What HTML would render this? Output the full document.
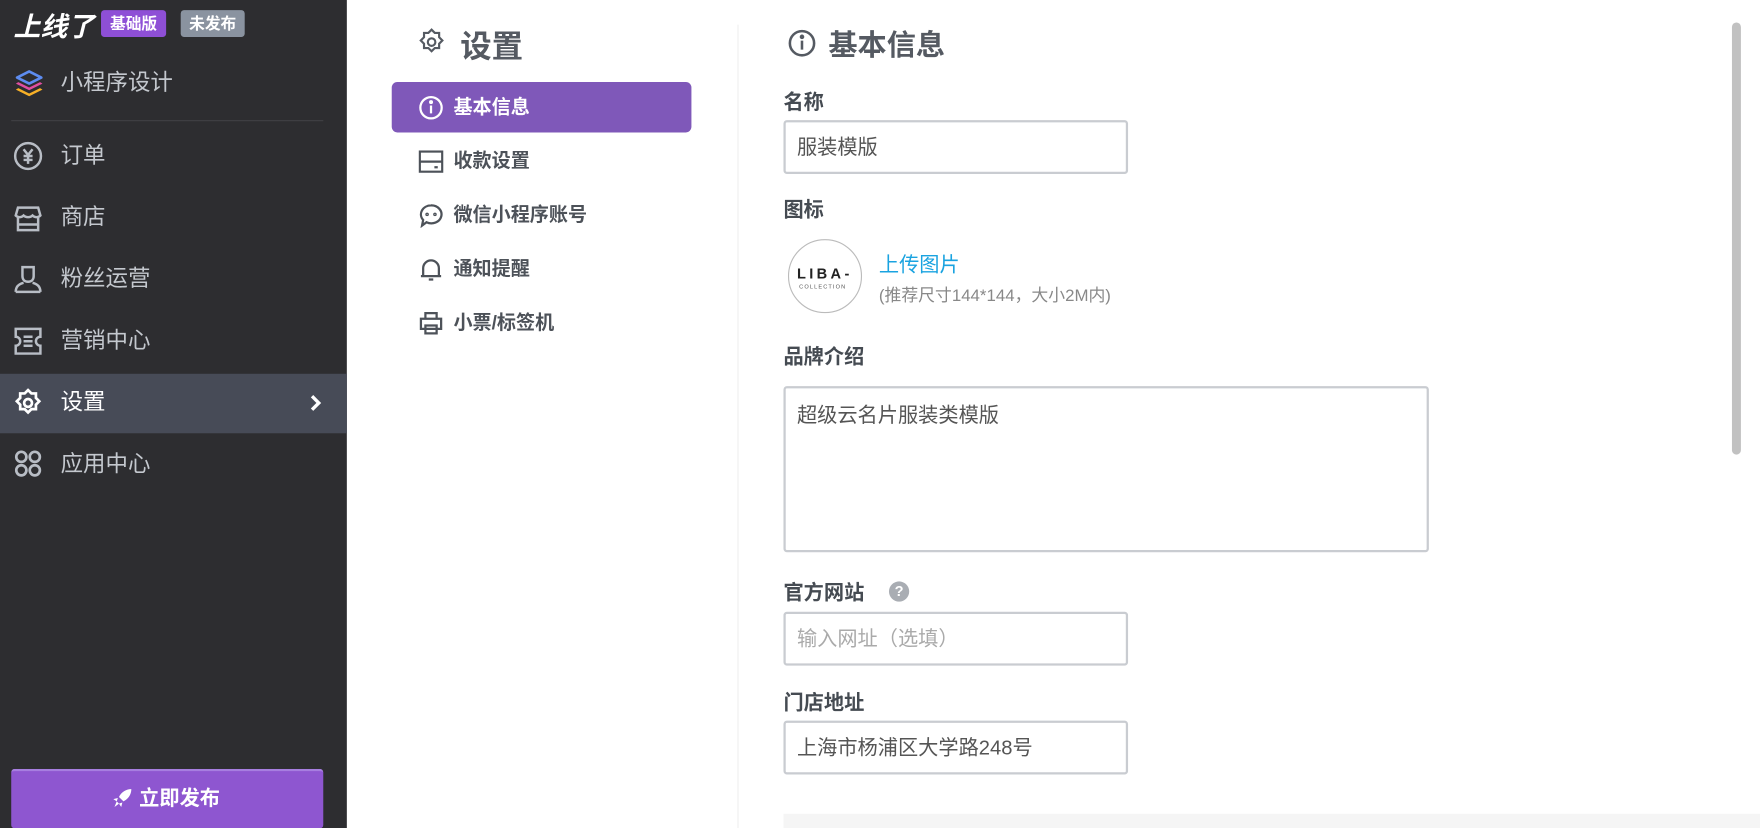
<!DOCTYPE html>
<html><head><meta charset="utf-8"><style>
html,body{margin:0;padding:0;width:1760px;height:828px;overflow:hidden;background:#fff}
#w{position:absolute;left:0;top:0;width:1568px;height:738px;transform:scale(1.12245);transform-origin:0 0;font-family:"Liberation Sans","Noto Sans CJK SC",sans-serif}
.a{position:absolute;white-space:nowrap}
#sb{position:absolute;left:0;top:0;width:309px;height:738px;background:#2d2d30}
.mi{position:absolute;left:54px;font-size:20px;color:#c4c8ce;line-height:24px}
.ic{position:absolute;left:12px}
.nav{position:absolute;left:404px;font-size:17px;font-weight:bold;color:#4d5259;line-height:20px}
.lbl{position:absolute;left:698px;font-size:18px;font-weight:bold;color:#454b52;line-height:22px}
.inp{position:absolute;left:698px;border:2px solid #c9ccd1;border-radius:3px;font-size:18px;color:#555;line-height:44px;padding-left:10px;box-sizing:border-box;height:48px;width:307px}
</style></head><body><div id="w">
<div id="sb">
 <div class="a" style="left:12px;top:4px;font-size:24px;font-weight:bold;font-style:italic;color:#fff">上线了</div>
 <div class="a" style="left:90px;top:9px;width:58px;height:24px;background:#8e4fd6;border-radius:3px;color:#fff;font-size:14px;font-weight:bold;text-align:center;line-height:24px">基础版</div>
 <div class="a" style="left:161px;top:9px;width:57px;height:24px;background:#8a93a0;border-radius:3px;color:#fff;font-size:14px;font-weight:bold;text-align:center;line-height:24px">未发布</div>
 <svg class="ic" style="top:61px" width="28" height="28" viewBox="0 0 26 26"><path d="M13 23L24 17.5 22 16.3 13 20.7 4 16.3 2 17.5z" fill="#f7b027"/><path d="M13 18L24 12.5 22 11.3 13 15.7 4 11.3 2 12.5z" fill="#e04ea0"/><path d="M13 12.5L23 7.5 13 2.5 3 7.5z" fill="none" stroke="#5d8cf0" stroke-width="2.2" stroke-linejoin="round"/></svg>
 <div class="mi" style="top:62px">小程序设计</div>
 <div class="a" style="left:10px;top:107px;width:278px;height:1px;background:#404044"></div>
 <svg class="ic" style="top:126px" width="26" height="26" viewBox="0 0 26 26" fill="none" stroke="#b8bdc5" stroke-width="2.2"><circle cx="13" cy="13" r="11.5"/><path d="M9 7l4 5 4-5M13 12v8M9 13h8M9 16.5h8"/></svg>
 <div class="mi" style="top:127px">订单</div>
 <svg class="ic" style="top:182px" width="26" height="26" viewBox="0 0 26 26" fill="none" stroke="#b8bdc5" stroke-width="2.2"><path d="M4 3h18l2 7c-2 2-5 2-7 0-2 2-6 2-8 0-2 2-5 2-7 0zM4 12v11h18V12M4 18h18"/></svg>
 <div class="mi" style="top:182px">商店</div>
 <svg class="ic" style="top:236px" width="26" height="26" viewBox="0 0 26 26" fill="none" stroke="#b8bdc5" stroke-width="2.2"><path d="M8 2h10v8c0 3-2 5-5 5s-5-2-5-5zM2 24c0-5 3-7 7-8M24 24c0-5-3-7-7-8M2 24h22"/></svg>
 <div class="mi" style="top:237px">粉丝运营</div>
 <svg class="ic" style="top:291px" width="26" height="26" viewBox="0 0 26 26" fill="none" stroke="#b8bdc5" stroke-width="2.2"><path d="M2 2h22v7a4 4 0 0 0 0 8v7H2v-7a4 4 0 0 0 0-8zM9 9h8M9 13h8M9 17h8"/></svg>
 <div class="mi" style="top:292px">营销中心</div>
 <div class="a" style="left:0;top:333px;width:309px;height:53px;background:#474b57"></div>
 <svg class="ic" style="top:346px" width="26" height="26" viewBox="0 0 26 26" fill="none" stroke="#fff" stroke-width="2.4"><path d="M13 1.5l3 3 4 0 0 4 3 3-3 3 0 4-4 0-3 3-3-3-4 0 0-4-3-3 3-3 0-4 4 0z"/><circle cx="13" cy="13" r="3.5"/></svg>
 <div class="mi" style="top:347px;color:#fff">设置</div>
 <svg class="a" style="left:275px;top:351px" width="12" height="16" viewBox="0 0 12 16"><path d="M3 2l6 6-6 6" fill="none" stroke="#fff" stroke-width="3"/></svg>
 <svg class="ic" style="top:400px" width="26" height="26" viewBox="0 0 26 26" fill="none" stroke="#b8bdc5" stroke-width="2.4"><circle cx="7" cy="7" r="4.5"/><circle cx="19" cy="7" r="4.5"/><circle cx="7" cy="19" r="4.5"/><circle cx="19" cy="19" r="4.5"/></svg>
 <div class="mi" style="top:402px">应用中心</div>
 <div class="a" style="left:10px;top:685px;width:278px;height:53px;background:#8e56d0;border-top:2px solid #a77ee0;border-radius:3px;box-sizing:border-box"></div>
 <svg class="a" style="left:100px;top:702px" width="18" height="18" viewBox="0 0 18 18"><path d="M17 1c-5 0-9 3-11 7l4 4c4-2 7-6 7-11zM5 9l-4 1 3 2zM9 13l-1 4 -2-3zM4 12l2 2-4 3z" fill="#fff"/></svg>
 <div class="a" style="left:124px;top:698px;color:#fff;font-size:18px;font-weight:bold;line-height:26px">立即发布</div>
</div>

<svg class="a" style="left:372px;top:25px" width="25" height="25" viewBox="0 0 26 26" fill="none" stroke="#555a62" stroke-width="2"><path d="M13 1.5l3 3 4 0 0 4 3 3-3 3 0 4-4 0-3 3-3-3-4 0 0-4-3-3 3-3 0-4 4 0z"/><circle cx="13" cy="13" r="3.5"/></svg>
<div class="a" style="left:410px;top:20px;font-size:28px;font-weight:bold;color:#555a62">设置</div>
<div class="a" style="left:657px;top:22px;width:1px;height:716px;background:#eee"></div>
<div class="a" style="left:349px;top:73px;width:267px;height:45px;background:#7f58b9;border-radius:5px"></div>
<svg class="a" style="left:373px;top:85px" width="22" height="22" viewBox="0 0 22 22" fill="none" stroke="#fff" stroke-width="2"><circle cx="11" cy="11" r="9.5"/><path d="M11 9v7"/><circle cx="11" cy="6" r="0.8" fill="#fff"/></svg>
<div class="nav" style="top:86px;color:#fff">基本信息</div>
<svg class="a" style="left:373px;top:134px" width="22" height="20" viewBox="0 0 22 20" fill="none" stroke="#4d5259" stroke-width="2"><rect x="1" y="1" width="20" height="18"/><path d="M1 10h20M14 15h3"/></svg>
<div class="nav" style="top:134px">收款设置</div>
<svg class="a" style="left:373px;top:181px" width="22" height="22" viewBox="0 0 22 22" fill="none" stroke="#4d5259" stroke-width="2"><path d="M11 2a9 8 0 1 1-4 15l-4 3 1-5A9 8 0 0 1 11 2z"/><circle cx="7.5" cy="10" r=".6"/><circle cx="14.5" cy="10" r=".6"/></svg>
<div class="nav" style="top:182px">微信小程序账号</div>
<svg class="a" style="left:373px;top:229px" width="22" height="22" viewBox="0 0 22 22" fill="none" stroke="#4d5259" stroke-width="2"><path d="M4 17V10a7 7 0 0 1 14 0v7zM2 17h18M9 20h4"/></svg>
<div class="nav" style="top:230px">通知提醒</div>
<svg class="a" style="left:373px;top:277px" width="22" height="22" viewBox="0 0 22 22" fill="none" stroke="#4d5259" stroke-width="2"><path d="M6 7V2h10v5M2 7h18v9H2zM6 13h10v7H6z"/></svg>
<div class="nav" style="top:278px">小票/标签机</div>

<svg class="a" style="left:702px;top:26px" width="25" height="25" viewBox="0 0 22 22" fill="none" stroke="#555a62" stroke-width="2"><circle cx="11" cy="11" r="9.5"/><path d="M11 9v7"/><circle cx="11" cy="6" r="0.8" fill="#555a62"/></svg>
<div class="a" style="left:738px;top:20px;font-size:26px;font-weight:bold;color:#555a62">基本信息</div>
<div class="lbl" style="top:80px">名称</div>
<div class="inp" style="top:107px">服装模版</div>
<div class="lbl" style="top:176px">图标</div>
<div class="a" style="left:702px;top:213px;width:64px;height:64px;border:1px solid #bbb;border-radius:50%"></div>
<div class="a" style="left:710px;top:236px;font-size:13px;font-weight:bold;letter-spacing:3px;color:#222">LIBA-</div>
<div class="a" style="left:712px;top:253px;font-size:5px;letter-spacing:1px;color:#555">COLLECTION</div>
<div class="a" style="left:783px;top:222px;font-size:18px;color:#1aa3e0">上传图片</div>
<div class="a" style="left:783px;top:252px;font-size:15px;color:#888">(推荐尺寸144*144，大小2M内)</div>
<div class="lbl" style="top:307px">品牌介绍</div>
<div class="inp" style="top:344px;width:575px;height:148px;line-height:48px">超级云名片服装类模版</div>
<div class="lbl" style="top:517px">官方网站</div>
<div class="a" style="left:792px;top:518px;width:18px;height:18px;border-radius:50%;background:#a9adb3;color:#fff;font-size:13px;font-weight:bold;text-align:center;line-height:18px">?</div>
<div class="inp" style="top:545px;color:#aaa">输入网址（选填）</div>
<div class="lbl" style="top:615px">门店地址</div>
<div class="inp" style="top:642px">上海市杨浦区大学路248号</div>
<div class="a" style="left:698px;top:725px;width:870px;height:13px;background:#f5f5f5"></div>
<div class="a" style="left:1543px;top:20px;width:8px;height:385px;background:#c1c1c1;border-radius:4px"></div>
</div></body></html>
